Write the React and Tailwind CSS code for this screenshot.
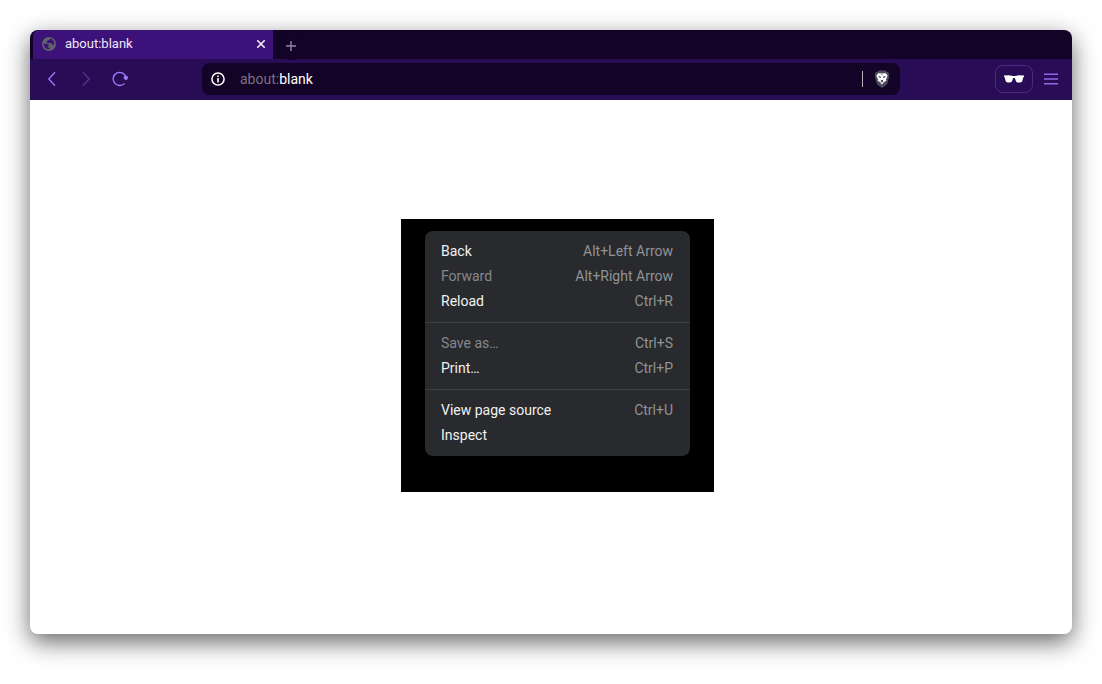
import React from 'react';

const menuGroups = [
  [
    { label: 'Back', shortcut: 'Alt+Left Arrow' },
    { label: 'Forward', shortcut: 'Alt+Right Arrow', disabled: true },
    { label: 'Reload', shortcut: 'Ctrl+R' },
  ],
  [
    { label: 'Save as…', shortcut: 'Ctrl+S', disabled: true },
    { label: 'Print…', shortcut: 'Ctrl+P' },
  ],
  [
    { label: 'View page source', shortcut: 'Ctrl+U' },
    { label: 'Inspect' },
  ],
];

const GlobeIcon = () => (
  <svg className="size-[14px] shrink-0" viewBox="0 0 14 14" aria-hidden="true">
    <circle cx="7" cy="7" r="7" fill="#606468" />
    <path
      d="M8.200 1.600C7.900 2.800 6.900 3.200 5.700 3.200C5.700 4.400 5.200 4.800 4.200 5.100L5 6H8.200C9.200 6 9.600 6.600 9.700 7.600H12.300C12.600 4.800 11 2.300 8.200 1.600Z"
      fill="#3c1179"
    />
    <path
      d="M1.700 6.800H4.600C6 6.800 6.900 7.600 7 9H5.700V10.600H7.600V12.300C4.200 12.600 1.500 10 1.700 6.800Z"
      fill="#3c1179"
    />
  </svg>
);

const LionIcon = () => (
  <svg className="h-[18px] w-4" viewBox="0 0 16 18" aria-hidden="true">
    <path
      d="M4.600 0.600H11.400L12.800 2L14 1.900L15.300 4L14.900 5.600L15.200 6.500L13.500 13C13.200 14 12.700 14.600 11.800 15.200L8.600 17.500C8.200 17.800 7.800 17.800 7.400 17.500L4.200 15.200C3.300 14.600 2.800 14 2.500 13L0.800 6.500L1.100 5.600L0.700 4L2 1.900L3.200 2Z"
      fill="#4a4a5c"
    />
    <path
      d="M4.600 3L6.500 3.400L8 3L9.500 3.400L11.400 3L13.500 5.400L13.100 7.200L11.900 9.200L12.200 10.800L10.200 12L8 14.400L5.800 12L3.800 10.800L4.100 9.200L2.900 7.200L2.500 5.400Z"
      fill="#fff"
    />
    <path
      d="M4.200 5.900L7 6.700L6.700 8L5 7.500ZM11.800 5.900L9 6.700L9.300 8L11 7.500ZM6.400 9.800L8 10.300L9.600 9.800L8.500 11.200L9.800 12L8 12.600L6.200 12L7.500 11.200ZM7.600 3.600H8.400V5.200H7.600Z"
      fill="#3b3950"
    />
  </svg>
);

const TabStrip = () => (
  <div className="flex h-[29px] items-start rounded-t-lg bg-[#130326] pl-[3px]">
    <div className="flex h-full w-60 items-center rounded-tl-md bg-[#3c1179] pr-[7px] pb-px pl-[9px]">
      <GlobeIcon />
      <span className="ml-[9px] flex-1 text-[13px] leading-5 text-[#eee8fa]">about:blank</span>
      <button type="button" aria-label="Close tab" className="flex size-[10px] items-center justify-center">
        <svg className="size-[10px]" viewBox="0 0 10 10" stroke="#f3effa" strokeWidth="1.600" aria-hidden="true">
          <path d="M1.300 1.300L8.700 8.700M8.700 1.300L1.300 8.700" />
        </svg>
      </button>
    </div>
    <button
      type="button"
      aria-label="New tab"
      className="relative mt-[2px] ml-1 flex size-7 items-center justify-center rounded-full bg-[#130326]"
    >
      <svg className="size-[10px]" viewBox="0 0 10 10" stroke="#9287a8" strokeWidth="1.400" aria-hidden="true">
        <path d="M5 0V10M0 5H10" />
      </svg>
    </button>
  </div>
);

const Toolbar = () => (
  <div className="flex h-[41px] items-center bg-[#290c56] pb-[2px]">
    <div className="flex w-[172px] shrink-0 items-center gap-[18px] pl-[14px] text-[#a07cff]">
      <button type="button" aria-label="Go back">
        <svg className="size-4" viewBox="0 0 16 16" fill="none" stroke="currentColor" strokeWidth="1.300" aria-hidden="true">
          <path d="M11 1.200L4.800 8L11 14.800" />
        </svg>
      </button>
      <button type="button" aria-label="Go forward" disabled className="text-[#573590]">
        <svg className="size-4" viewBox="0 0 16 16" fill="none" stroke="currentColor" strokeWidth="1.300" aria-hidden="true">
          <path d="M5 1.200L11.200 8L5 14.800" />
        </svg>
      </button>
      <button type="button" aria-label="Reload page">
        <svg className="size-4" viewBox="0 0 16 16" fill="none" stroke="currentColor" strokeWidth="1.300" aria-hidden="true">
          <path d="M12.600 12.400A6.600 6.600 0 1 1 14 5.800" />
          <path d="M11.800 5.200L15.800 5V8L13.600 9.200L11.800 7.600Z" fill="currentColor" stroke="none" />
        </svg>
      </button>
    </div>

    <div className="flex h-8 min-w-0 flex-1 items-center rounded-lg bg-[#130326] pr-[10px] pl-[9px]">
      <button type="button" aria-label="View site information">
        <svg className="size-[14px]" viewBox="0 0 14 14" fill="none" stroke="#fff" aria-hidden="true">
          <circle cx="7" cy="7" r="6.100" strokeWidth="1.500" />
          <path d="M7 6.100V10.400M7 3.500V5.100" strokeWidth="1.600" />
        </svg>
      </button>
      <div className="ml-[15px] flex-1 text-sm text-[#7b7181]">
        about:<span className="text-white">blank</span>
      </div>
      <div className="mr-[11px] h-4 w-px bg-[#b9b3bf]" />
      <button type="button" aria-label="Brave Shields">
        <LionIcon />
      </button>
    </div>

    <div className="flex w-[172px] shrink-0 items-center justify-end gap-[10px] pr-[13px]">
      <button
        type="button"
        aria-label="Private window"
        className="flex h-7 w-[38px] items-center justify-center rounded-lg border border-[#4a2a80]"
      >
        <svg className="h-2 w-5" viewBox="0 0 20 8" fill="#fff" aria-hidden="true">
          <path d="M0 0.600L5 0.300L9 1H11L15 0.300L20 0.600V2L19.300 2.300L18.400 5.800C18 7 17.300 7.500 16.200 7.500H14.200C12.900 7.500 12.200 6.900 11.800 5.800L10.800 2.900H9.200L8.200 5.800C7.800 6.900 7.100 7.500 5.800 7.500H3.800C2.700 7.500 2 7 1.600 5.800L0.700 2.300L0 2Z" />
        </svg>
      </button>
      <button type="button" aria-label="Main menu">
        <svg className="h-3 w-4" viewBox="0 0 16 12" stroke="#8f68ea" strokeWidth="1.400" aria-hidden="true">
          <path d="M1 1.300H15M1 6H15M1 10.700H15" />
        </svg>
      </button>
    </div>
  </div>
);

const MenuItem = ({ label, shortcut, disabled }) => (
  <button
    type="button"
    role="menuitem"
    disabled={disabled}
    className="flex h-[25px] w-full items-center justify-between pr-[17px] pb-[2px] pl-4 text-left text-[#f1f1f2] disabled:text-[#85888c]"
  >
    <span>{label}</span>
    {shortcut && <span className="text-[#909397]">{shortcut}</span>}
  </button>
);

const ContextMenu = () => (
  <div className="bg-black px-6 pt-3 pb-9">
    <div role="menu" className="w-[265px] divide-y divide-[#3f4043] rounded-lg bg-[#292a2d] text-sm">
      {menuGroups.map((group) => (
        <div key={group[0].label} role="group" className="py-2">
          {group.map((item) => (
            <MenuItem key={item.label} {...item} />
          ))}
        </div>
      ))}
    </div>
  </div>
);

export default function App() {
  return (
    <div className="flex min-h-screen flex-col bg-white px-[30px] pt-[30px] pb-[50px] font-['Roboto',sans-serif]">
      <div className="flex flex-1 flex-col rounded-lg bg-white shadow-[0_8px_24px_rgba(0,0,0,0.6)]">
        <TabStrip />
        <Toolbar />
        <main className="flex flex-1 items-start justify-center pt-[119px] pb-10 pl-[13px]">
          <ContextMenu />
        </main>
      </div>
    </div>
  );
}
